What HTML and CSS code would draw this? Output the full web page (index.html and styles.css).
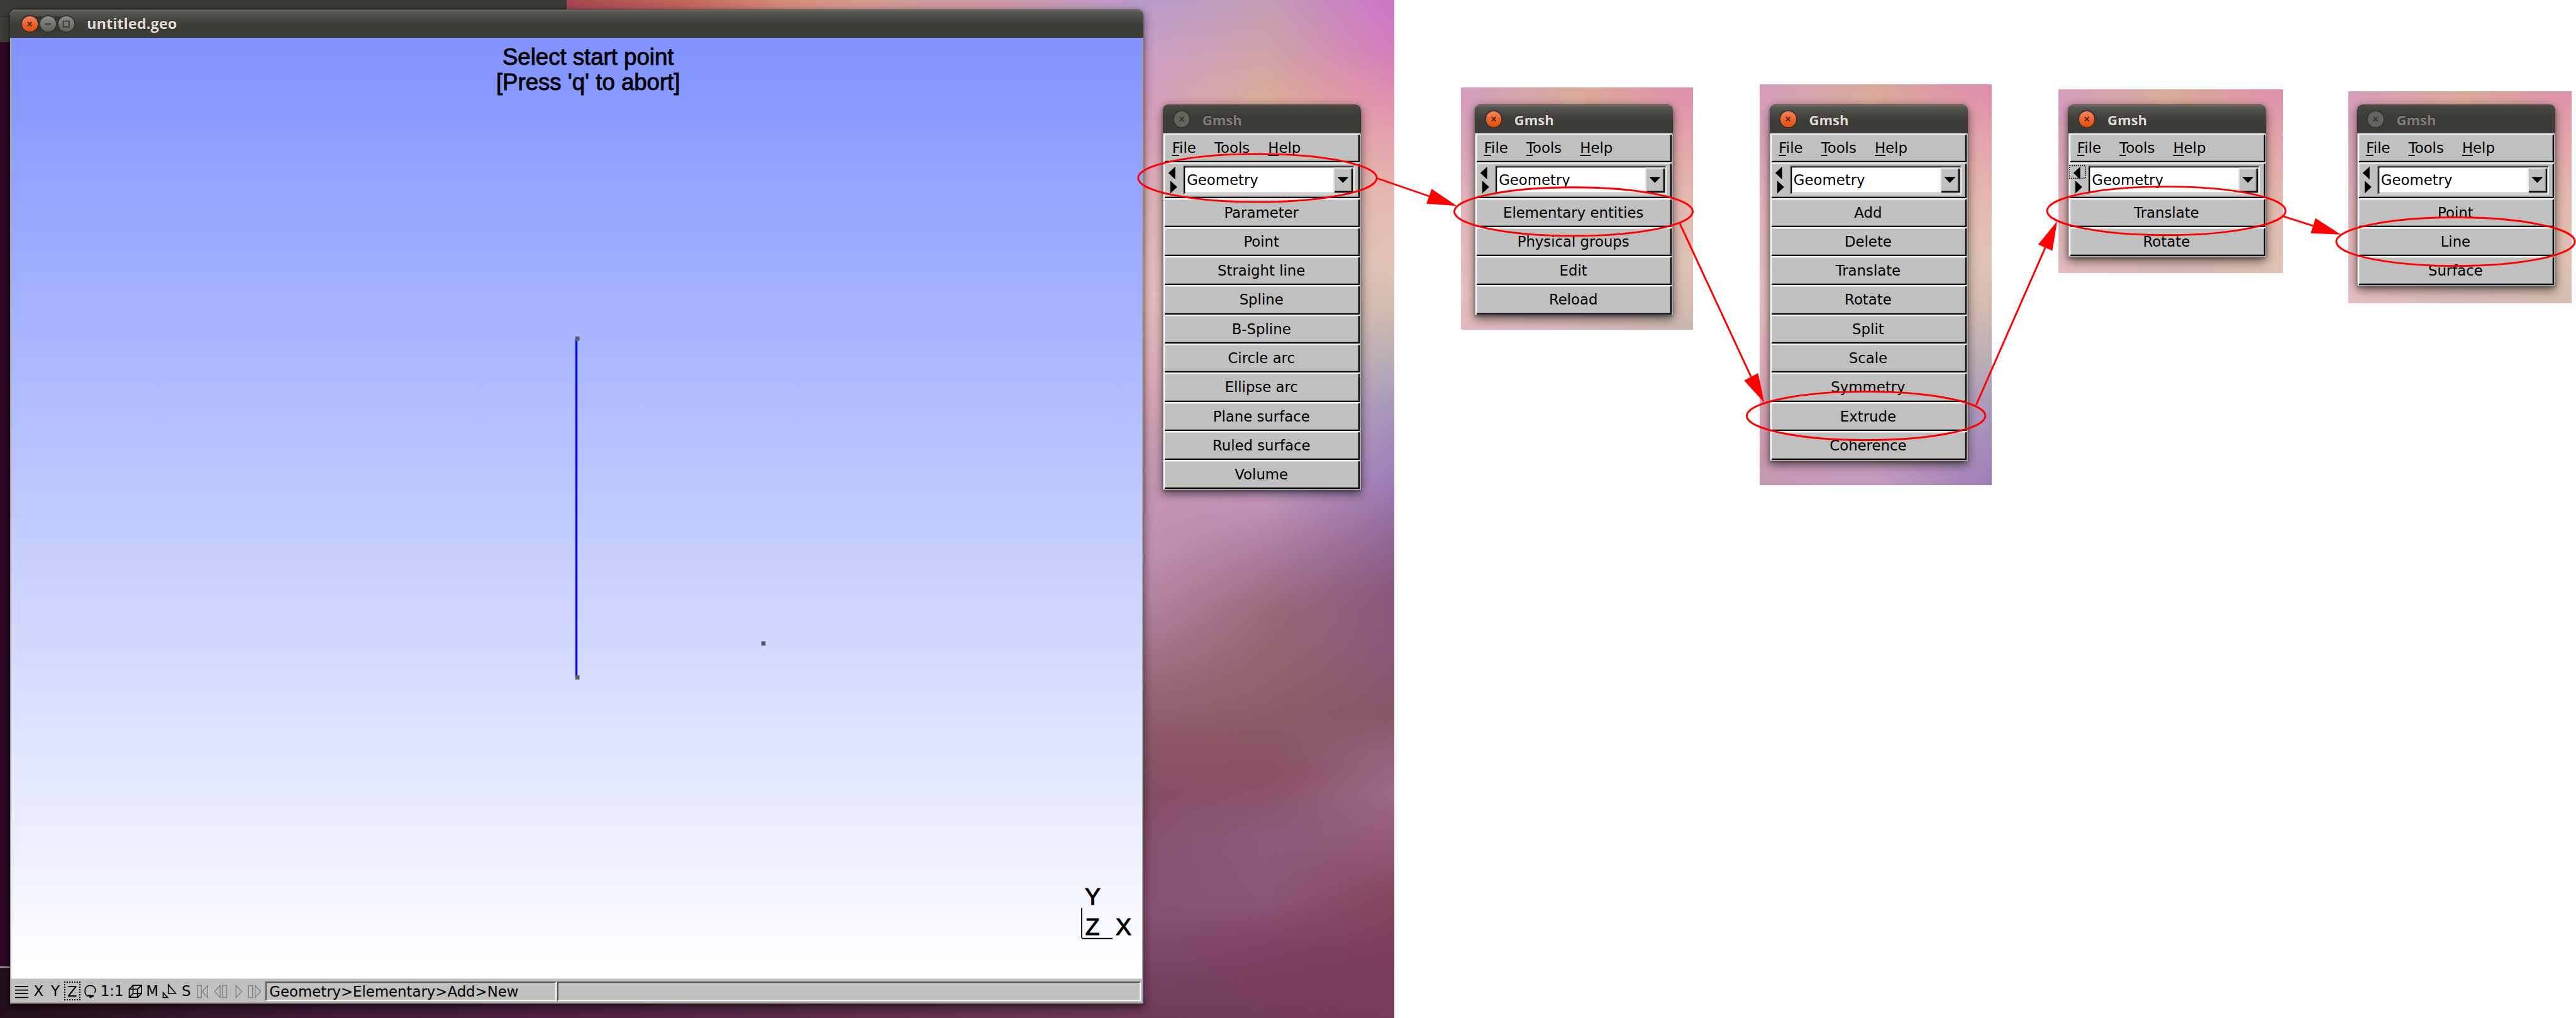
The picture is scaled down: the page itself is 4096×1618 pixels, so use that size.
FILE: index.html
```html
<!DOCTYPE html>
<html lang="en">
<head>
<meta charset="utf-8">
<title>Gmsh – untitled.geo</title>
<link rel="stylesheet" href="styles.css">
</head>
<body>
<svg class="defs" aria-hidden="true">
  <symbol id="close" viewBox="0 0 40 40">
    <path d="M14.5 14.5 L25.5 25.5 M25.5 14.5 L14.5 25.5" fill="none" stroke="currentColor" stroke-width="3"/>
  </symbol>
  <symbol id="arrows" viewBox="0 0 40 78">
    <path d="M27.5 9.5 V38 L12.3 23.7 Z M16.6 40.5 V69 L31.8 54.7 Z"/>
  </symbol>
  <symbol id="drop" viewBox="0 0 26 14">
    <path d="M0.5 0.5 H25.5 L13 13.5 Z"/>
  </symbol>
</svg>

<main class="stage">
  <section class="desktop">
    <div class="wall-top"></div>
    <div class="wall-bottom"></div>
    <div class="wall-left"></div>
    <div class="back-window"></div>
    <div class="wallpaper wallpaper-main"><i class="wl"></i><i class="wm"></i><i class="wr"></i></div>
  </section>

  <section class="window">
    <header class="titlebar">
      <div class="buttons">
        <svg class="knob hot"><use href="#close"/></svg>
        <svg class="knob" viewBox="0 0 40 40"><path d="M12 20 H28" stroke="currentColor" stroke-width="3"/></svg>
        <svg class="knob" viewBox="0 0 40 40"><rect x="12.5" y="12.5" width="15" height="15" fill="none" stroke="currentColor" stroke-width="3"/></svg>
      </div>
      <h1 class="title">untitled.geo</h1>
    </header>
    <div class="canvas">
      <p class="hint">Select start point<br>[Press 'q' to abort]</p>
      <svg class="scene" viewBox="25 84 2499 2078" preserveAspectRatio="none">
        <rect x="1271.5" y="751" width="4.6" height="744" fill="#0000ff"/>
        <g fill="#5a5a5a">
          <rect x="1271.3" y="744.2" width="9.3" height="9.3"/>
          <rect x="1271.3" y="1493" width="9.3" height="9.3"/>
          <rect x="1682.4" y="1417.7" width="9.3" height="9.3"/>
        </g>
        <path d="M2390.4 2007 V2073.5 M2391 2074.4 H2458.7" fill="none" stroke="#000" stroke-width="2.3"/>
        <g class="axis">
          <text x="2397.3" y="2000.5">Y</text>
          <text x="2398.5" y="2067">Z</text>
          <text x="2465.5" y="2067">X</text>
        </g>
      </svg>
    </div>
    <footer class="status">
      <div class="tools">
        <svg class="t-menu" viewBox="28 2166 40 44"><path d="M33.5 2177 H62.5 M33.5 2192.5 H62.5 M33.5 2201.5 H62.5 M33.5 2185 H62.5" stroke="#000" stroke-width="2.3"/></svg>
        <span class="t-x">X</span><span class="t-y">Y</span><span class="t-z">Z</span>
        <svg class="t-rot" viewBox="178 2166 40 44"><path d="M194 2199 L190 2195 L188 2190 V2183 L191 2178 L196 2175 H203 L208 2178 L211 2183 V2187 L209 2191" fill="none" stroke="#000" stroke-width="2.3"/><path d="M192.5 2195.5 L199.5 2195.5 L200 2193.5 V2196 H207 V2199 L199.5 2203 Z"/></svg>
        <span class="t-one">1:1</span>
        <svg class="t-cube" viewBox="278 2166 42 44"><path d="M285.7 2183 H304 V2201 H285.7 Z M294 2174.5 H313 V2192.5 H294 Z M285.7 2183 L294 2174.5 M304 2183 L313 2174.5 M304 2201 L313 2192.5 M285.7 2201 L294 2192.5" fill="none" stroke="#000" stroke-width="2.3"/></svg>
        <span class="t-m">M</span>
        <svg class="t-tri" viewBox="354 2166 40 44"><path d="M373 2173 V2192.5 H389.5 Z M361.5 2190.5 V2201.5 H371.5 Z" fill="none" stroke="#000" stroke-width="2.2"/></svg>
        <span class="t-s">S</span>
        <svg class="t-play" viewBox="430 2166 154 44"><g fill="none" stroke="#868686" stroke-width="2.1">
          <rect x="437" y="2175" width="8.5" height="26.5"/><path d="M459.5 2175 V2201.5 L447.5 2188 Z"/>
          <path d="M487 2175 V2201.5 L475 2188 Z"/><rect x="492" y="2175" width="9.5" height="26.5"/>
          <path d="M522 2175 V2201.5 L534.5 2188 Z"/>
          <rect x="550" y="2175" width="9" height="26.5"/><path d="M564.5 2175 V2201.5 L576.5 2188 Z"/>
        </g></svg>
      </div>
      <div class="well path">Geometry&gt;Elementary&gt;Add&gt;New</div>
      <div class="well rest"></div>
    </footer>
  </section>

  <div class="swatch s2"><div class="wallpaper"><i class="wl"></i><i class="wm"></i><i class="wr"></i></div></div>
  <div class="swatch s3"><div class="wallpaper"><i class="wl"></i><i class="wm"></i><i class="wr"></i></div></div>
  <div class="swatch s4"><div class="wallpaper"><i class="wl"></i><i class="wm"></i><i class="wr"></i></div></div>
  <div class="swatch s5"><div class="wallpaper"><i class="wl"></i><i class="wm"></i><i class="wr"></i></div></div>

  <section class="panel p1 idle">
    <header class="titlebar"><svg class="knob"><use href="#close"/></svg><h2 class="title">Gmsh</h2></header>
    <nav class="menu bevel"><a><u>F</u>ile</a><a><u>T</u>ools</a><a><u>H</u>elp</a></nav>
    <div class="module bevel"><svg class="nav"><use href="#arrows"/></svg><div class="combo"><span>Geometry</span><b><svg><use href="#drop"/></svg></b></div></div>
    <ul>
      <li class="bevel">Parameter</li><li class="bevel">Point</li><li class="bevel">Straight line</li><li class="bevel">Spline</li><li class="bevel">B-Spline</li><li class="bevel">Circle arc</li><li class="bevel">Ellipse arc</li><li class="bevel">Plane surface</li><li class="bevel">Ruled surface</li><li class="bevel">Volume</li>
    </ul>
  </section>

  <section class="panel p2">
    <header class="titlebar"><svg class="knob hot"><use href="#close"/></svg><h2 class="title">Gmsh</h2></header>
    <nav class="menu bevel"><a><u>F</u>ile</a><a><u>T</u>ools</a><a><u>H</u>elp</a></nav>
    <div class="module bevel"><svg class="nav"><use href="#arrows"/></svg><div class="combo"><span>Geometry</span><b><svg><use href="#drop"/></svg></b></div></div>
    <ul>
      <li class="bevel">Elementary entities</li><li class="bevel">Physical groups</li><li class="bevel">Edit</li><li class="bevel">Reload</li>
    </ul>
  </section>

  <section class="panel p3">
    <header class="titlebar"><svg class="knob hot"><use href="#close"/></svg><h2 class="title">Gmsh</h2></header>
    <nav class="menu bevel"><a><u>F</u>ile</a><a><u>T</u>ools</a><a><u>H</u>elp</a></nav>
    <div class="module bevel"><svg class="nav"><use href="#arrows"/></svg><div class="combo"><span>Geometry</span><b><svg><use href="#drop"/></svg></b></div></div>
    <ul>
      <li class="bevel">Add</li><li class="bevel">Delete</li><li class="bevel">Translate</li><li class="bevel">Rotate</li><li class="bevel">Split</li><li class="bevel">Scale</li><li class="bevel">Symmetry</li><li class="bevel">Extrude</li><li class="bevel">Coherence</li>
    </ul>
  </section>

  <section class="panel p4">
    <header class="titlebar"><svg class="knob hot"><use href="#close"/></svg><h2 class="title">Gmsh</h2></header>
    <nav class="menu bevel"><a><u>F</u>ile</a><a><u>T</u>ools</a><a><u>H</u>elp</a></nav>
    <div class="module bevel"><svg class="nav" viewBox="0 0 40 78"><use href="#arrows" width="40" height="78"/><rect x="4" y="7.5" width="35" height="27.5" fill="none" stroke="#000" stroke-width="2.2" stroke-dasharray="2.3 2.3"/></svg><div class="combo"><span>Geometry</span><b><svg><use href="#drop"/></svg></b></div></div>
    <ul>
      <li class="bevel">Translate</li><li class="bevel">Rotate</li>
    </ul>
  </section>

  <section class="panel p5 idle">
    <header class="titlebar"><svg class="knob"><use href="#close"/></svg><h2 class="title">Gmsh</h2></header>
    <nav class="menu bevel"><a><u>F</u>ile</a><a><u>T</u>ools</a><a><u>H</u>elp</a></nav>
    <div class="module bevel"><svg class="nav"><use href="#arrows"/></svg><div class="combo"><span>Geometry</span><b><svg><use href="#drop"/></svg></b></div></div>
    <ul>
      <li class="bevel">Point</li><li class="bevel">Line</li><li class="bevel">Surface</li>
    </ul>
  </section>

  <svg class="notes" viewBox="0 0 5695 2249">
    <g fill="none" stroke="#ff0000" stroke-width="4">
      <ellipse cx="2780" cy="393" rx="263.7" ry="53.2"/>
      <ellipse cx="3478.8" cy="467.3" rx="263.7" ry="53.6"/>
      <ellipse cx="4125.5" cy="918.7" rx="263.7" ry="53.6"/>
      <ellipse cx="4789.3" cy="465.7" rx="263.7" ry="53.6"/>
      <ellipse cx="5428.7" cy="533.7" rx="263.7" ry="53.6"/>
      <path d="M3044 393.5 L3160 433.5 M3713.8 493.7 L3871.2 832.4 M4369 894.4 L4521.7 546.7 M5047.8 477.7 L5113.7 498.5"/>
    </g>
    <g fill="#ff0000">
      <path d="M3220.7 454.7 L3153.6 449.9 L3165 417.1 Z"/>
      <path d="M3900.5 889.6 L3855.8 840.5 L3886.7 824.3 Z"/>
      <path d="M4548 488.3 L4506 540 L4537.3 553.8 Z"/>
      <path d="M5175 518 L5108.4 515.1 L5119 481.9 Z"/>
    </g>
  </svg>
</main>
</body>
</html>
```
FILE: styles.css
```css
/* 1rem = 10 design units; 569.5rem spans the 4096px window */
html { font-size: 7.19227px; background: #fff; }
body { margin: 0; background: #fff; color: #000; font: 22.8px/1 "DejaVu Sans", sans-serif; overflow: hidden; }
* { box-sizing: border-box; }
h1, h2, p, ul { margin: 0; padding: 0; }
ul { list-style: none; }
.defs { position: absolute; width: 0; height: 0; }
.stage { position: relative; width: 4096px; height: 1618px; overflow: hidden; }

/* desktop background */
.desktop { position: absolute; left: 0; top: 0; width: 308.25rem; height: 1618px; overflow: hidden; background: #2c0822; }
.desktop > * { position: absolute; }
.wall-top { left: 125.3rem; top: 0; width: 128rem; height: 8rem; background: linear-gradient(90deg, #a94650, #c4645f 20%, #d58c7c 38%, #d69b92 52%, #cf9aa8 75%, #b79bcb); }
.wall-bottom { left: 0; bottom: 0; width: 253rem; height: 11rem; background: linear-gradient(90deg, #24101c, #2c1422 8%, #3f1a35 26%, #4b2040 45%, #5b2c49 70%, #6f3a57); }
.wall-left { left: 0; top: 0; width: 6rem; height: 213.9rem; background: #2c0822; border-bottom: 2px solid #a9a8a0; }
.back-window { left: 0; top: 0; width: 125.3rem; height: 9.3rem; background: linear-gradient(#3c3b37 3.5rem, #33322e 3.5rem, #33322e 3.7rem, #3f3e3a 3.7rem); }
.wallpaper { position: absolute; width: 55.6rem; height: 224.9rem; }
.wallpaper-main { left: 252.7rem; top: 0; }
.wallpaper i { position: absolute; inset: 0; }
.wl { background: linear-gradient(#b79bcb, #cf9fc6 6%, #d89cbe 10%, #dda6bd 15%, #e3b5bd 20%, #e8c0c2 29%, #e0b0ba 36%, #d0a0b4 42%, #c696b2 48%, #c192b0 54%, #b283a0 60%, #9f6c80 66%, #905868 72%, #874d66 78%, #895070 84%, #875072 90%, #7c4565 95%, #6f3a57); }
.wm { background: linear-gradient(#c39cb4, #cfa3a8 5%, #dba997 9%, #dbb0a0 12%, #d9bcb8 30%, #c39abf 48%, #bd90b4 50%, #a9789a 55%, #9a6878 60%, #91606a 68%, #894f62 76%, #90597a 82%, #8e5676 88%, #804264 93%, #733a58); -webkit-mask-image: linear-gradient(90deg, transparent, #000 50%); mask-image: linear-gradient(90deg, transparent, #000 50%); }
.wr { background: linear-gradient(#cc74cb, #d47cbc 5%, #e190ae 10%, #e5a3ac 14%, #e5bab0 20%, #e0c4b6 26%, #d3bbae 30%, #b8aeb4 35%, #a696bb 40%, #9c7db8 47%, #92699a 52%, #88587c 58%, #8a587a 63%, #865668 70%, #96617b 74%, #a06886 78%, #905572 84%, #85465e 88%, #7a3c5a 95%, #763a5a); -webkit-mask-image: linear-gradient(90deg, transparent 50%, #000); mask-image: linear-gradient(90deg, transparent 50%, #000); }
.swatch { position: absolute; overflow: hidden; }
.s2 { left: 322.98rem; top: 19.29rem; width: 51.37rem; height: 53.58rem; }
.s2 .wallpaper { left: -1.3rem; top: -19.3rem; }
.s3 { left: 388.98rem; top: 18.58rem; width: 51.37rem; height: 88.55rem; }
.s3 .wallpaper { left: -2.2rem; top: -18.6rem; }
.s4 { left: 455.12rem; top: 19.7rem; width: 49.58rem; height: 40.7rem; }
.s4 .wallpaper { left: -2.35rem; top: -19.7rem; }
.s5 { left: 519.22rem; top: 20.1rem; width: 49.33rem; height: 46.9rem; }
.s5 .wallpaper { left: -2.55rem; top: -20.1rem; }

/* window frames */
.window, .panel { position: absolute; display: flex; flex-direction: column; background: #a9a8a0; border-radius: 1.2rem 1.2rem 0 0; box-shadow: 0 .8rem 2.2rem rgba(0,0,0,.55), 0 .2rem .6rem rgba(0,0,0,.3); }
.titlebar { display: flex; align-items: center; flex: none; background: linear-gradient(#45443f, #6a6962 3%, #56554f 10%, #4a4944 30%, #3d3c38 55%, #3c3b37); border-radius: 1.2rem 1.2rem 0 0; color: #dfdbd2; }
.idle .titlebar { background: linear-gradient(#4e4d48, #464540 12%, #3d3c38 45%, #3c3b37); color: #807d78; }
.title { font: bold 22px/1 "Open Sans", sans-serif; text-shadow: 0 -1px 1px rgba(0,0,0,.5); padding-top: 1px; }
.knob { width: 3.4rem; height: 3.4rem; border-radius: 50%; color: #3b3a36; background: linear-gradient(#8d8c85, #62615b); box-shadow: 0 0 0 2px #35342f; flex: none; }
.knob.hot { background: linear-gradient(#f8825f, #ee6530 50%, #e04f06); color: #4e2410; }
.idle .knob { background: #64635c; color: #35342f; }

.window { left: 2.28rem; top: 2.1rem; width: 250.45rem; height: 219.7rem; padding: 0 .25rem .25rem .2rem; }
.window .titlebar { height: 6.3rem; margin: 0 -.25rem 0 -.2rem; padding-left: 2.6rem; }
.window .buttons { display: flex; gap: .65rem; background: #35342f; border-radius: 2rem; }
.window .title { margin-left: 2.8rem; font-size: 23.6px; }
.canvas { position: relative; flex: 1; background: linear-gradient(#8093ff, #fff); }
.scene { position: absolute; left: 0; top: 0; width: 100%; height: 100%; }
.hint { position: absolute; left: 0; right: 0; top: 1.5rem; padding-left: 5.1rem; text-align: center; font: 36.6px/5.56rem "Liberation Sans", sans-serif; -webkit-text-stroke: .9px #000; }
.axis { font: 52px "Liberation Sans", sans-serif; stroke: #000; stroke-width: 1.6px; }

.status { display: flex; flex: none; height: 5.35rem; padding: .5rem .2rem 0 .3rem; background: #c0c0c0; border-top: 1px solid #d8d8d8; }
.tools { display: flex; width: 55.9rem; height: 4.4rem; flex: none; }
.tools > * { flex: none; height: 4.4rem; line-height: 4.3rem; text-align: center; }
.t-menu { width: 4rem; } .t-x { width: 3.5rem; } .t-y { width: 3.9rem; }
.t-z { width: 3.6rem; height: 4.2rem !important; line-height: 3.9rem !important; border: 2px dotted #000; }
.t-rot { width: 4rem; } .t-one { width: 6rem; } .t-cube { width: 4.2rem; } .t-m { width: 3.4rem; }
.t-tri { width: 4rem; } .t-s { width: 3.6rem; } .t-play { width: 15.4rem; }
.well { height: 4.4rem; line-height: 3.9rem; border: 2px solid; border-color: #555 #f2f2f2 #f2f2f2 #555; white-space: nowrap; }
.path { width: 64.4rem; padding-left: .6rem; }
.rest { flex: 1; margin-left: .1rem; }

/* tool panels */
.panel { top: 23.12rem; width: 43.85rem; padding: 0 .25rem .25rem .2rem; }
.p1 { left: 257.07rem; } .p2 { left: 326.03rem; } .p3 { left: 391.2rem; } .p4 { left: 457.17rem; } .p5 { left: 521.06rem; }
.panel .titlebar { height: 6.4rem; margin: 0 -.25rem 0 -.2rem; padding-left: 2.45rem; }
.panel .title { margin-left: 2.9rem; }
.bevel { background: #c0c0c0; box-shadow: inset 2px 2px #f4f4f4, inset -2px -2px #000, inset 3px 3px #d8d8d8, inset -3px -3px #888; }
.menu { display: flex; align-items: center; height: 6.36rem; padding: 0 0 0 1.85rem; }
.menu a { margin-right: 4.05rem; }
.menu u { text-decoration-thickness: 1.6px; text-underline-offset: 3px; text-decoration-skip-ink: none; }
.module { display: flex; height: 7.86rem; }
.nav { width: 4rem; height: 7.8rem; flex: none; margin-left: -.2rem; }
.combo { display: flex; width: 38rem; height: 6.4rem; margin: .75rem 0 0 .45rem; background: #fff; padding: 3px; box-shadow: inset 1.6px 1.6px #888, inset -1.6px -1.6px #f4f4f4, inset 3.3px 3.3px #000, inset -3px -3px #b0b0b0; }
.combo span { flex: 1; padding-left: .45rem; line-height: 5.8rem; }
.combo b { display: flex; align-items: center; justify-content: center; width: 4.3rem; background: #c0c0c0; box-shadow: inset 2px 2px #e8e8e8, inset -2px -2px #000, inset -3.3px -3.3px #888; }
.combo b svg { width: 2.6rem; height: 1.4rem; margin-right: .1rem; }
.panel li { height: 6.435rem; line-height: 6.6rem; text-align: center; padding-right: .2rem; }

.notes { position: absolute; left: 0; top: 0; width: 4096px; height: 1618px; }
```
